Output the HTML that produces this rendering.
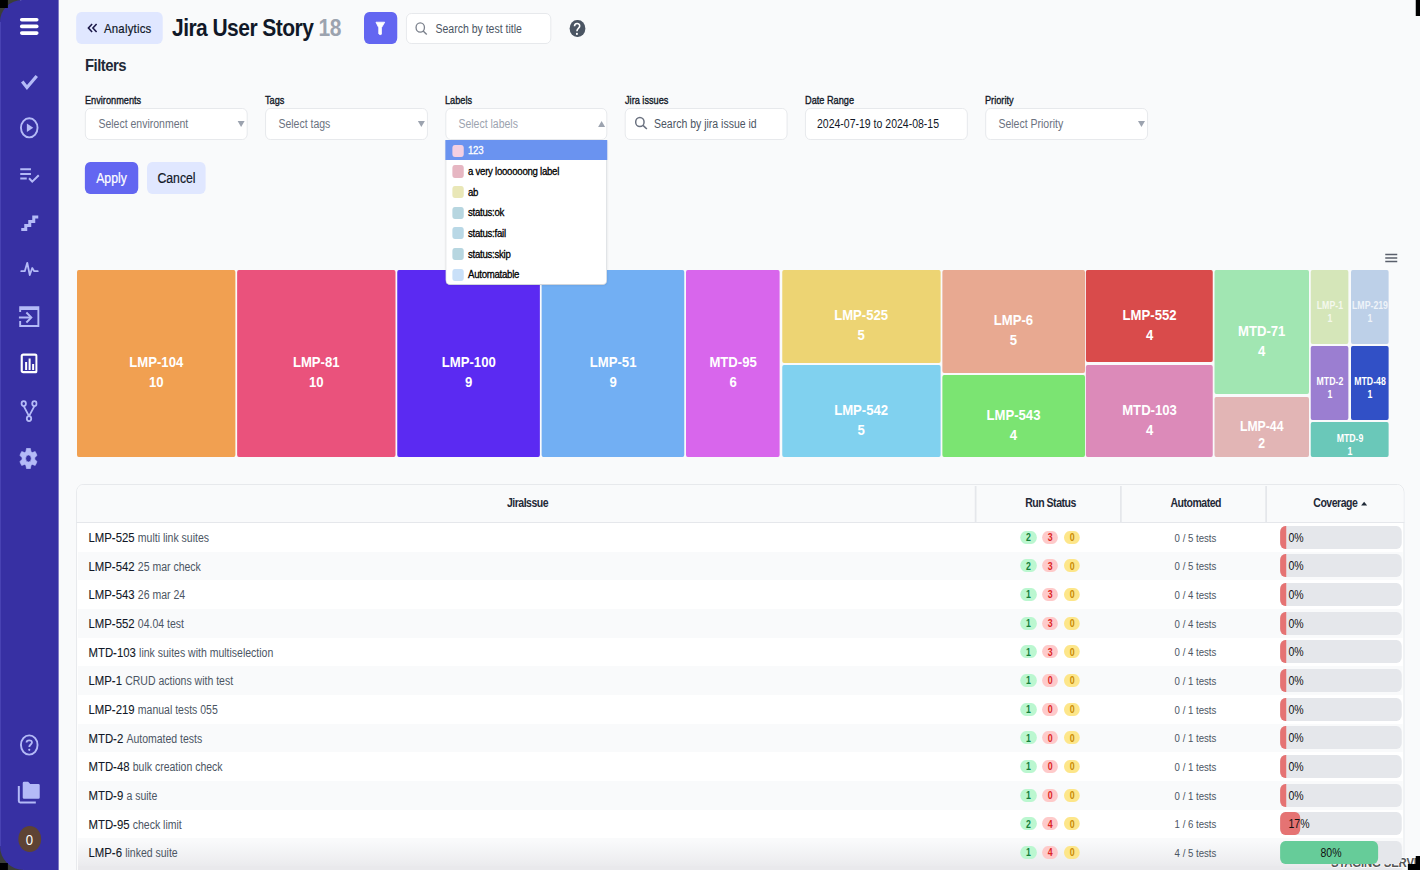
<!DOCTYPE html>
<html><head><meta charset="utf-8"><style>
html,body{margin:0;padding:0;width:1420px;height:870px;overflow:hidden;background:#f9fafb}
#app{position:absolute;left:0;top:0;width:1622.86px;height:870px;transform:scaleX(0.875);transform-origin:0 0;overflow:hidden;font-family:"Liberation Sans",sans-serif}
.t{position:absolute;white-space:nowrap}
</style></head><body><div id="app">
<div style="position:absolute;left:0.00px;top:0px;width:1622.86px;height:870px;background:#f9fafb"></div>
<div style="position:absolute;left:0.00px;top:0px;width:22.86px;height:22px;background:#3b3e38"></div>
<div style="position:absolute;left:0.00px;top:844px;width:27.43px;height:26px;background:#3b3e38"></div>
<div style="position:absolute;left:0.00px;top:0px;width:67.43px;height:870px;background:#3730a3;border-radius:25.14px 0 0 27.43px / 22px 0 0 24px"></div>
<div style="position:absolute;left:0.00px;top:22px;width:1.14px;height:824px;background:#4b45b5"></div>
<svg style="position:absolute;left:21.71px;top:17px;width:22.86px;height:20px" viewBox="0 0 20 20" preserveAspectRatio="none"><g stroke="#fff" stroke-width="3.6" stroke-linecap="round"><line x1="2.5" y1="2.8" x2="17.5" y2="2.8"/><line x1="2.5" y1="9.4" x2="17.5" y2="9.4"/><line x1="2.5" y1="16.1" x2="17.5" y2="16.1"/></g></svg>
<svg style="position:absolute;left:21.71px;top:71px;width:22.86px;height:20px" viewBox="0 0 20 20" preserveAspectRatio="none"><path d="M3 10.5 L7.7 16.5 L17.5 5" fill="none" stroke="#b4baf7" stroke-width="3.2"/></svg>
<svg style="position:absolute;left:21.71px;top:117px;width:22.86px;height:22px" viewBox="0 0 20 22" preserveAspectRatio="none"><ellipse cx="10" cy="10.8" rx="8.3" ry="9.6" fill="none" stroke="#b4baf7" stroke-width="1.9"/><path d="M7.6 6.5 L14 10.8 L7.6 15.1Z" fill="#b4baf7"/></svg>
<svg style="position:absolute;left:21.71px;top:166px;width:24.00px;height:18px" viewBox="0 0 21 18" preserveAspectRatio="none"><g stroke="#b4baf7" stroke-width="2" fill="none"><line x1="1" y1="3.2" x2="11.7" y2="3.2"/><line x1="1" y1="8" x2="11.7" y2="8"/><line x1="1" y1="12.4" x2="7.5" y2="12.4"/><path d="M9.8 12.2 L13 15.6 L19.5 9.2"/></g></svg>
<svg style="position:absolute;left:21.71px;top:211.5px;width:24.00px;height:20px" viewBox="0 0 21 20" preserveAspectRatio="none"><path d="M2 17.5 H6.5 V13.5 H10.5 V9.5 H14.5 V5 H19" fill="none" stroke="#b4baf7" stroke-width="3"/></svg>
<svg style="position:absolute;left:21.71px;top:260px;width:22.86px;height:18px" viewBox="0 0 20 18" preserveAspectRatio="none"><path d="M2 11.2 H5.5 L8 2.8 L10.5 15 L13 8 L15 11.2 H18.5" fill="none" stroke="#b4baf7" stroke-width="1.8" stroke-linejoin="round" stroke-linecap="round"/></svg>
<svg style="position:absolute;left:20.57px;top:305px;width:25.14px;height:23px" viewBox="0 0 22 23" preserveAspectRatio="none"><g fill="none" stroke="#b4baf7" stroke-width="1.9"><path d="M1.8 7 V2.2 H20 V21 H1.8 V16"/><line x1="1.8" y1="3.5" x2="20" y2="3.5" stroke-width="3"/><line x1="0.5" y1="12.5" x2="12.5" y2="12.5"/><path d="M8 7.5 L13 12.5 L8 17.5"/></g></svg>
<svg style="position:absolute;left:22.86px;top:353px;width:20.57px;height:21px" viewBox="0 0 18 21" preserveAspectRatio="none"><g fill="none" stroke="#fff"><rect x="1.6" y="1.6" width="14.8" height="17.6" rx="1.5" stroke-width="2.2"/></g><g fill="#fff"><rect x="5" y="9" width="2" height="8"/><rect x="8.5" y="5.5" width="2" height="11.5"/><rect x="12" y="11" width="2" height="6"/></g></svg>
<svg style="position:absolute;left:22.86px;top:400px;width:20.57px;height:23px" viewBox="0 0 18 23" preserveAspectRatio="none"><g fill="none" stroke="#b4baf7" stroke-width="1.8"><ellipse cx="3.6" cy="3.6" rx="2.2" ry="2.5"/><ellipse cx="14.3" cy="3.6" rx="2.2" ry="2.5"/><ellipse cx="8.9" cy="18.6" rx="2.2" ry="2.5"/><path d="M3.6 6.1 L8.9 16.1 M14.3 6.1 L8.9 16.1"/></g></svg>
<svg style="position:absolute;left:21.71px;top:448px;width:21.71px;height:21px" viewBox="0 0 19 21" preserveAspectRatio="none"><path d="M7.30,0.33 L11.10,0.33 L11.80,3.83 L12.95,4.59 L15.96,3.54 L17.86,7.29 L15.55,9.75 L15.55,11.25 L17.86,13.71 L15.96,17.46 L12.95,16.41 L11.80,17.17 L11.10,20.67 L7.30,20.67 L6.60,17.17 L5.45,16.41 L2.44,17.46 L0.54,13.71 L2.85,11.25 L2.85,9.75 L0.54,7.29 L2.44,3.54 L5.45,4.59 L6.60,3.83Z M12.00,10.5 A2.80,3.5 0 1,0 6.40,10.5 A2.80,3.5 0 1,0 12.00,10.5Z" fill="#b4baf7" fill-rule="evenodd" stroke="#b4baf7" stroke-width="0.6" stroke-linejoin="round"/></svg>
<svg style="position:absolute;left:21.71px;top:734px;width:22.86px;height:22px" viewBox="0 0 20 22" preserveAspectRatio="none"><ellipse cx="10" cy="11" rx="8.3" ry="9.6" fill="none" stroke="#b4baf7" stroke-width="1.9"/><path d="M7.3 8.5 C7.3 5.8 12.7 5.6 12.7 8.4 C12.7 10.4 10 10.6 10 13" fill="none" stroke="#b4baf7" stroke-width="1.8"/><circle cx="10" cy="15.8" r="1.1" fill="#b4baf7"/></svg>
<svg style="position:absolute;left:19.43px;top:780px;width:27.43px;height:24px" viewBox="0 0 24 24" preserveAspectRatio="none"><path d="M7.4 1.8 H11.5 L13.6 3.9 H21.8 Q23.1 3.9 23.1 5.2 V17.5 Q23.1 18.8 21.8 18.8 H7.4 Q6.1 18.8 6.1 17.5 V3.1 Q6.1 1.8 7.4 1.8 Z" fill="#b4baf7"/><path d="M2.2 6 V21 Q2.2 22.4 3.6 22.4 H19.2" fill="none" stroke="#b4baf7" stroke-width="2"/></svg>
<div style="position:absolute;left:20.57px;top:826px;width:26.29px;height:26px;border-radius:50%;background:#5e4334"></div>
<div class="t" style="left:-566.29px;width:1200px;text-align:center;top:829.50px;height:20px;line-height:20px;font-size:15px;font-weight:400;color:#fff;">0</div>
<div style="position:absolute;left:86.86px;top:12px;width:99.43px;height:32px;background:#e0e7ff;border-radius:6px"></div>
<svg style="position:absolute;left:99.43px;top:22px;width:12.57px;height:12px" viewBox="0 0 11 12" preserveAspectRatio="none"><path d="M5.5 2 L1.8 6 L5.5 10 M10 2 L6.3 6 L10 10" fill="none" stroke="#1e1b4b" stroke-width="1.6"/></svg>
<div class="t" style="left:118.86px;top:19.80px;height:17px;line-height:17px;font-size:13px;font-weight:400;color:#111827;letter-spacing:0.25px;-webkit-text-stroke:0.2px #111827">Analytics</div>
<div class="t" style="left:196.57px;top:12.00px;height:31px;line-height:31px;font-size:24px;font-weight:700;color:#111827;letter-spacing:-0.62px">Jira User Story <span style="color:#9ca3af">18</span></div>
<div style="position:absolute;left:416.00px;top:12px;width:37.71px;height:32px;background:#6366f1;border-radius:6px"></div>
<svg style="position:absolute;left:426.29px;top:20px;width:17.14px;height:16px" viewBox="0 0 15 16" preserveAspectRatio="none"><path d="M3.2 2.2 H12 L8.7 7.8 V14.2 Q7.4 15.4 6 13.8 V7.8 Z" fill="#fff" stroke="#fff" stroke-width="0.8" stroke-linejoin="round"/></svg>
<div style="position:absolute;left:464.00px;top:13px;width:165.71px;height:31px;background:#fff;border:1px solid #e5e7eb;border-radius:6px;box-sizing:border-box"></div>
<svg style="position:absolute;left:474.29px;top:22px;width:16.00px;height:13px" viewBox="0 0 14 13" preserveAspectRatio="none"><ellipse cx="5.5" cy="5.5" rx="4.2" ry="4.6" fill="none" stroke="#7b818c" stroke-width="1.3"/><line x1="8.4" y1="9" x2="12" y2="12.5" stroke="#7b818c" stroke-width="1.4"/></svg>
<div class="t" style="left:497.71px;top:20.50px;height:16px;line-height:16px;font-size:12px;font-weight:400;color:#4b5563;">Search by test title</div>
<div style="position:absolute;left:651.43px;top:20px;width:17.14px;height:17px;border-radius:50%;background:#4b5563"></div>
<svg style="position:absolute;left:651.43px;top:20px;width:17.14px;height:17px" viewBox="0 0 15 17" preserveAspectRatio="none"><path d="M4.9 6.3 C4.9 2.7 10.1 2.5 10.1 5.9 C10.1 8.2 7.3 8.4 7.3 11.3" fill="none" stroke="#fff" stroke-width="1.6"/><ellipse cx="7.3" cy="13.9" rx="1.05" ry="1.15" fill="#fff"/></svg>
<div class="t" style="left:97.14px;top:54.60px;height:22px;line-height:22px;font-size:17px;font-weight:700;color:#1f2937;letter-spacing:-0.6px">Filters</div>
<div class="t" style="left:97.14px;top:92.90px;height:14px;line-height:14px;font-size:10.5px;font-weight:400;color:#111827;-webkit-text-stroke:0.35px #111827">Environments</div>
<div style="position:absolute;left:97.14px;top:108px;width:185.83px;height:32px;background:#fff;border:1px solid #e5e7eb;border-radius:6px;box-sizing:border-box"></div>
<div class="t" style="left:112.46px;top:115.50px;height:16px;line-height:16px;font-size:12px;font-weight:400;color:#6b7280;">Select environment</div>
<svg style="position:absolute;left:271.43px;top:119.5px;width:9.14px;height:8px" viewBox="0 0 8 8" preserveAspectRatio="none"><path d="M0.5 1 H7.5 L4 7Z" fill="#9ca3af"/></svg>
<div class="t" style="left:302.86px;top:92.90px;height:14px;line-height:14px;font-size:10.5px;font-weight:400;color:#111827;-webkit-text-stroke:0.35px #111827">Tags</div>
<div style="position:absolute;left:302.86px;top:108px;width:185.83px;height:32px;background:#fff;border:1px solid #e5e7eb;border-radius:6px;box-sizing:border-box"></div>
<div class="t" style="left:318.17px;top:115.50px;height:16px;line-height:16px;font-size:12px;font-weight:400;color:#6b7280;">Select tags</div>
<svg style="position:absolute;left:477.14px;top:119.5px;width:9.14px;height:8px" viewBox="0 0 8 8" preserveAspectRatio="none"><path d="M0.5 1 H7.5 L4 7Z" fill="#9ca3af"/></svg>
<div class="t" style="left:508.57px;top:92.90px;height:14px;line-height:14px;font-size:10.5px;font-weight:400;color:#111827;-webkit-text-stroke:0.35px #111827">Labels</div>
<div style="position:absolute;left:508.57px;top:108px;width:185.83px;height:32px;background:#fff;border:1px solid #e5e7eb;border-radius:6px;box-sizing:border-box"></div>
<div class="t" style="left:523.89px;top:115.50px;height:16px;line-height:16px;font-size:12px;font-weight:400;color:#9ca3af;">Select labels</div>
<svg style="position:absolute;left:682.86px;top:119.5px;width:9.14px;height:8px" viewBox="0 0 8 8" preserveAspectRatio="none"><path d="M0.5 7 H7.5 L4 1Z" fill="#9ca3af"/></svg>
<div class="t" style="left:714.29px;top:92.90px;height:14px;line-height:14px;font-size:10.5px;font-weight:400;color:#111827;-webkit-text-stroke:0.35px #111827">Jira issues</div>
<div style="position:absolute;left:714.29px;top:108px;width:185.83px;height:32px;background:#fff;border:1px solid #e5e7eb;border-radius:6px;box-sizing:border-box"></div>
<svg style="position:absolute;left:724.57px;top:116px;width:16.00px;height:14px" viewBox="0 0 14 14" preserveAspectRatio="none"><ellipse cx="5.5" cy="6" rx="4.2" ry="4.6" fill="none" stroke="#6b7280" stroke-width="1.5"/><line x1="8.6" y1="9.4" x2="12.5" y2="13" stroke="#6b7280" stroke-width="1.6"/></svg>
<div class="t" style="left:747.43px;top:115.50px;height:16px;line-height:16px;font-size:12px;font-weight:400;color:#4b5563;">Search by jira issue id</div>
<div class="t" style="left:920.00px;top:92.90px;height:14px;line-height:14px;font-size:10.5px;font-weight:400;color:#111827;-webkit-text-stroke:0.35px #111827">Date Range</div>
<div style="position:absolute;left:920.00px;top:108px;width:185.83px;height:32px;background:#fff;border:1px solid #e5e7eb;border-radius:6px;box-sizing:border-box"></div>
<div class="t" style="left:933.71px;top:115.50px;height:16px;line-height:16px;font-size:12px;font-weight:400;color:#111827;">2024-07-19 to 2024-08-15</div>
<div class="t" style="left:1125.71px;top:92.90px;height:14px;line-height:14px;font-size:10.5px;font-weight:400;color:#111827;-webkit-text-stroke:0.35px #111827">Priority</div>
<div style="position:absolute;left:1125.71px;top:108px;width:185.83px;height:32px;background:#fff;border:1px solid #e5e7eb;border-radius:6px;box-sizing:border-box"></div>
<div class="t" style="left:1141.03px;top:115.50px;height:16px;line-height:16px;font-size:12px;font-weight:400;color:#6b7280;">Select Priority</div>
<svg style="position:absolute;left:1300.00px;top:119.5px;width:9.14px;height:8px" viewBox="0 0 8 8" preserveAspectRatio="none"><path d="M0.5 1 H7.5 L4 7Z" fill="#9ca3af"/></svg>
<div style="position:absolute;left:97.14px;top:162px;width:60.57px;height:32px;background:#6366f1;border-radius:6px"></div>
<div class="t" style="left:-472.57px;width:1200px;text-align:center;top:169.00px;height:18px;line-height:18px;font-size:14px;font-weight:400;color:#fff;-webkit-text-stroke:0.2px #fff">Apply</div>
<div style="position:absolute;left:168.00px;top:162px;width:67.43px;height:32px;background:#e0e7ff;border-radius:6px"></div>
<div class="t" style="left:-398.29px;width:1200px;text-align:center;top:169.00px;height:18px;line-height:18px;font-size:14px;font-weight:400;color:#111827;-webkit-text-stroke:0.2px #111827">Cancel</div>
<div style="position:absolute;left:88.00px;top:270px;width:181.14px;height:187.3px;background:#f1a051;border-radius:2px"></div>
<div class="t" style="left:-421.43px;width:1200px;text-align:center;top:352.35px;height:20px;line-height:20px;font-size:15px;font-weight:700;color:#fff;opacity:1">LMP-104</div>
<div class="t" style="left:-421.43px;width:1200px;text-align:center;top:372.15px;height:20px;line-height:20px;font-size:15px;font-weight:700;color:#fff;opacity:1">10</div>
<div style="position:absolute;left:270.86px;top:270px;width:181.14px;height:187.3px;background:#ea527c;border-radius:2px"></div>
<div class="t" style="left:-238.57px;width:1200px;text-align:center;top:352.35px;height:20px;line-height:20px;font-size:15px;font-weight:700;color:#fff;opacity:1">LMP-81</div>
<div class="t" style="left:-238.57px;width:1200px;text-align:center;top:372.15px;height:20px;line-height:20px;font-size:15px;font-weight:700;color:#fff;opacity:1">10</div>
<div style="position:absolute;left:454.29px;top:270px;width:162.86px;height:187.3px;background:#5b2af2;border-radius:2px"></div>
<div class="t" style="left:-64.29px;width:1200px;text-align:center;top:352.35px;height:20px;line-height:20px;font-size:15px;font-weight:700;color:#fff;opacity:1">LMP-100</div>
<div class="t" style="left:-64.29px;width:1200px;text-align:center;top:372.15px;height:20px;line-height:20px;font-size:15px;font-weight:700;color:#fff;opacity:1">9</div>
<div style="position:absolute;left:619.43px;top:270px;width:162.51px;height:187.3px;background:#72aff3;border-radius:2px"></div>
<div class="t" style="left:100.69px;width:1200px;text-align:center;top:352.35px;height:20px;line-height:20px;font-size:15px;font-weight:700;color:#fff;opacity:1">LMP-51</div>
<div class="t" style="left:100.69px;width:1200px;text-align:center;top:372.15px;height:20px;line-height:20px;font-size:15px;font-weight:700;color:#fff;opacity:1">9</div>
<div style="position:absolute;left:784.23px;top:270px;width:107.20px;height:187.3px;background:#d866ec;border-radius:2px"></div>
<div class="t" style="left:237.83px;width:1200px;text-align:center;top:352.35px;height:20px;line-height:20px;font-size:15px;font-weight:700;color:#fff;opacity:1">MTD-95</div>
<div class="t" style="left:237.83px;width:1200px;text-align:center;top:372.15px;height:20px;line-height:20px;font-size:15px;font-weight:700;color:#fff;opacity:1">6</div>
<div style="position:absolute;left:893.71px;top:270px;width:180.91px;height:92.5px;background:#edd473;border-radius:2px"></div>
<div class="t" style="left:384.17px;width:1200px;text-align:center;top:304.95px;height:20px;line-height:20px;font-size:15px;font-weight:700;color:#fff;opacity:1">LMP-525</div>
<div class="t" style="left:384.17px;width:1200px;text-align:center;top:324.75px;height:20px;line-height:20px;font-size:15px;font-weight:700;color:#fff;opacity:1">5</div>
<div style="position:absolute;left:893.71px;top:365px;width:180.91px;height:92.30000000000001px;background:#80d1ef;border-radius:2px"></div>
<div class="t" style="left:384.17px;width:1200px;text-align:center;top:399.85px;height:20px;line-height:20px;font-size:15px;font-weight:700;color:#fff;opacity:1">LMP-542</div>
<div class="t" style="left:384.17px;width:1200px;text-align:center;top:419.65px;height:20px;line-height:20px;font-size:15px;font-weight:700;color:#fff;opacity:1">5</div>
<div style="position:absolute;left:1076.91px;top:270px;width:162.63px;height:102.80000000000001px;background:#e8a991;border-radius:2px"></div>
<div class="t" style="left:558.23px;width:1200px;text-align:center;top:310.10px;height:20px;line-height:20px;font-size:15px;font-weight:700;color:#fff;opacity:1">LMP-6</div>
<div class="t" style="left:558.23px;width:1200px;text-align:center;top:329.90px;height:20px;line-height:20px;font-size:15px;font-weight:700;color:#fff;opacity:1">5</div>
<div style="position:absolute;left:1076.91px;top:375.3px;width:162.63px;height:82.0px;background:#7be472;border-radius:2px"></div>
<div class="t" style="left:558.23px;width:1200px;text-align:center;top:405.00px;height:20px;line-height:20px;font-size:15px;font-weight:700;color:#fff;opacity:1">LMP-543</div>
<div class="t" style="left:558.23px;width:1200px;text-align:center;top:424.80px;height:20px;line-height:20px;font-size:15px;font-weight:700;color:#fff;opacity:1">4</div>
<div style="position:absolute;left:1241.26px;top:270px;width:145.03px;height:92.39999999999998px;background:#d94b4b;border-radius:2px"></div>
<div class="t" style="left:713.77px;width:1200px;text-align:center;top:304.90px;height:20px;line-height:20px;font-size:15px;font-weight:700;color:#fff;opacity:1">LMP-552</div>
<div class="t" style="left:713.77px;width:1200px;text-align:center;top:324.70px;height:20px;line-height:20px;font-size:15px;font-weight:700;color:#fff;opacity:1">4</div>
<div style="position:absolute;left:1241.26px;top:365px;width:145.03px;height:92.30000000000001px;background:#dc8ab9;border-radius:2px"></div>
<div class="t" style="left:713.77px;width:1200px;text-align:center;top:399.85px;height:20px;line-height:20px;font-size:15px;font-weight:700;color:#fff;opacity:1">MTD-103</div>
<div class="t" style="left:713.77px;width:1200px;text-align:center;top:419.65px;height:20px;line-height:20px;font-size:15px;font-weight:700;color:#fff;opacity:1">4</div>
<div style="position:absolute;left:1388.11px;top:270px;width:107.66px;height:124px;background:#a1e6b2;border-radius:2px"></div>
<div class="t" style="left:841.94px;width:1200px;text-align:center;top:320.70px;height:20px;line-height:20px;font-size:15px;font-weight:700;color:#fff;opacity:1">MTD-71</div>
<div class="t" style="left:841.94px;width:1200px;text-align:center;top:340.50px;height:20px;line-height:20px;font-size:15px;font-weight:700;color:#fff;opacity:1">4</div>
<div style="position:absolute;left:1388.11px;top:396.9px;width:107.66px;height:60.400000000000034px;background:#e2b5b5;border-radius:2px"></div>
<div class="t" style="left:841.94px;width:1200px;text-align:center;top:416.80px;height:18px;line-height:18px;font-size:14px;font-weight:700;color:#fff;opacity:1">LMP-44</div>
<div class="t" style="left:841.94px;width:1200px;text-align:center;top:433.60px;height:18px;line-height:18px;font-size:14px;font-weight:700;color:#fff;opacity:1">2</div>
<div style="position:absolute;left:1498.29px;top:270px;width:43.20px;height:73.80000000000001px;background:#d5e6b9;border-radius:2px"></div>
<div class="t" style="left:919.89px;width:1200px;text-align:center;top:298.90px;height:13px;line-height:13px;font-size:10px;font-weight:700;color:#fff;opacity:0.75">LMP-1</div>
<div class="t" style="left:919.89px;width:1200px;text-align:center;top:311.90px;height:13px;line-height:13px;font-size:10px;font-weight:700;color:#fff;opacity:0.75">1</div>
<div style="position:absolute;left:1544.00px;top:270px;width:43.43px;height:73.80000000000001px;background:#bdd0e8;border-radius:2px"></div>
<div class="t" style="left:965.71px;width:1200px;text-align:center;top:298.90px;height:13px;line-height:13px;font-size:10px;font-weight:700;color:#fff;opacity:0.75">LMP-219</div>
<div class="t" style="left:965.71px;width:1200px;text-align:center;top:311.90px;height:13px;line-height:13px;font-size:10px;font-weight:700;color:#fff;opacity:0.75">1</div>
<div style="position:absolute;left:1498.29px;top:346.3px;width:43.20px;height:73.69999999999999px;background:#9b7ed1;border-radius:2px"></div>
<div class="t" style="left:919.89px;width:1200px;text-align:center;top:375.15px;height:13px;line-height:13px;font-size:10px;font-weight:700;color:#fff;opacity:1">MTD-2</div>
<div class="t" style="left:919.89px;width:1200px;text-align:center;top:388.15px;height:13px;line-height:13px;font-size:10px;font-weight:700;color:#fff;opacity:1">1</div>
<div style="position:absolute;left:1544.00px;top:346.3px;width:43.43px;height:73.69999999999999px;background:#3150c6;border-radius:2px"></div>
<div class="t" style="left:965.71px;width:1200px;text-align:center;top:375.15px;height:13px;line-height:13px;font-size:10px;font-weight:700;color:#fff;opacity:1">MTD-48</div>
<div class="t" style="left:965.71px;width:1200px;text-align:center;top:388.15px;height:13px;line-height:13px;font-size:10px;font-weight:700;color:#fff;opacity:1">1</div>
<div style="position:absolute;left:1498.29px;top:422.2px;width:89.14px;height:35.10000000000002px;background:#6ac8b9;border-radius:2px"></div>
<div class="t" style="left:942.86px;width:1200px;text-align:center;top:431.75px;height:13px;line-height:13px;font-size:10px;font-weight:700;color:#fff;opacity:1">MTD-9</div>
<div class="t" style="left:942.86px;width:1200px;text-align:center;top:444.75px;height:13px;line-height:13px;font-size:10px;font-weight:700;color:#fff;opacity:1">1</div>
<svg style="position:absolute;left:1582.29px;top:252.8px;width:16.00px;height:10px" viewBox="0 0 14 10" preserveAspectRatio="none"><g stroke="#5a5f6b" stroke-width="1.5"><line x1="1" y1="1.5" x2="13" y2="1.5"/><line x1="1" y1="5" x2="13" y2="5"/><line x1="1" y1="8.5" x2="13" y2="8.5"/></g></svg>
<div style="position:absolute;left:508.57px;top:140px;width:185.49px;height:144.5px;background:#fff;border:1px solid #d1d5db;border-top:none;border-radius:0 0 5px 5px;box-sizing:border-box;box-shadow:0 1px 2px rgba(0,0,0,0.05)"></div>
<div style="position:absolute;left:508.57px;top:140px;width:185.49px;height:20px;background:#6a93f0"></div>
<div style="position:absolute;left:517.49px;top:144.6px;width:12.57px;height:12.300000000000011px;background:#f3cfe2;border-radius:3px"></div>
<div class="t" style="left:534.86px;top:143.30px;height:14px;line-height:14px;font-size:11px;font-weight:400;color:#fff;letter-spacing:-0.3px;-webkit-text-stroke:0.3px #fff">123</div>
<div style="position:absolute;left:517.49px;top:165.25px;width:12.57px;height:12.300000000000011px;background:#e6b6c2;border-radius:3px"></div>
<div class="t" style="left:534.86px;top:163.95px;height:14px;line-height:14px;font-size:11px;font-weight:400;color:#000;letter-spacing:-0.3px;-webkit-text-stroke:0.3px #000">a very loooooong label</div>
<div style="position:absolute;left:517.49px;top:185.9px;width:12.57px;height:12.300000000000011px;background:#e9e7b7;border-radius:3px"></div>
<div class="t" style="left:534.86px;top:184.60px;height:14px;line-height:14px;font-size:11px;font-weight:400;color:#000;letter-spacing:-0.3px;-webkit-text-stroke:0.3px #000">ab</div>
<div style="position:absolute;left:517.49px;top:206.54999999999998px;width:12.57px;height:12.300000000000011px;background:#b7d6e0;border-radius:3px"></div>
<div class="t" style="left:534.86px;top:205.25px;height:14px;line-height:14px;font-size:11px;font-weight:400;color:#000;letter-spacing:-0.3px;-webkit-text-stroke:0.3px #000">status:ok</div>
<div style="position:absolute;left:517.49px;top:227.2px;width:12.57px;height:12.300000000000011px;background:#b9d8e6;border-radius:3px"></div>
<div class="t" style="left:534.86px;top:225.90px;height:14px;line-height:14px;font-size:11px;font-weight:400;color:#000;letter-spacing:-0.3px;-webkit-text-stroke:0.3px #000">status:fail</div>
<div style="position:absolute;left:517.49px;top:247.85px;width:12.57px;height:12.299999999999983px;background:#b7d6e0;border-radius:3px"></div>
<div class="t" style="left:534.86px;top:246.55px;height:14px;line-height:14px;font-size:11px;font-weight:400;color:#000;letter-spacing:-0.3px;-webkit-text-stroke:0.3px #000">status:skip</div>
<div style="position:absolute;left:517.49px;top:268.5px;width:12.57px;height:12.299999999999955px;background:#c9e0f8;border-radius:3px"></div>
<div class="t" style="left:534.86px;top:267.20px;height:14px;line-height:14px;font-size:11px;font-weight:400;color:#000;letter-spacing:-0.3px;-webkit-text-stroke:0.3px #000">Automatable</div>
<div style="position:absolute;left:87.43px;top:484px;width:1517.14px;height:396px;background:#fff;border:1px solid #e5e7eb;border-radius:8px 8px 0 0;box-sizing:border-box"></div>
<div style="position:absolute;left:88.00px;top:485px;width:1516.00px;height:37.299999999999955px;background:#f9fafb;border-radius:8px 8px 0 0"></div>
<div style="position:absolute;left:87.43px;top:522px;width:1517.14px;height:1px;background:#e5e7eb"></div>
<div style="position:absolute;left:1113.71px;top:485.5px;width:2.29px;height:36.5px;background:#e5e7eb"></div>
<div style="position:absolute;left:1280.00px;top:485.5px;width:2.29px;height:36.5px;background:#e5e7eb"></div>
<div style="position:absolute;left:1445.71px;top:485.5px;width:2.29px;height:36.5px;background:#e5e7eb"></div>
<div class="t" style="left:2.86px;width:1200px;text-align:center;top:495.40px;height:16px;line-height:16px;font-size:12px;font-weight:700;color:#1f2937;letter-spacing:-0.55px">JiraIssue</div>
<div class="t" style="left:600.57px;width:1200px;text-align:center;top:495.40px;height:16px;line-height:16px;font-size:12px;font-weight:700;color:#1f2937;letter-spacing:-0.55px">Run Status</div>
<div class="t" style="left:766.51px;width:1200px;text-align:center;top:495.40px;height:16px;line-height:16px;font-size:12px;font-weight:700;color:#1f2937;letter-spacing:-0.55px">Automated</div>
<div class="t" style="left:926.06px;width:1200px;text-align:center;top:495.40px;height:16px;line-height:16px;font-size:12px;font-weight:700;color:#1f2937;letter-spacing:-0.55px">Coverage</div>
<svg style="position:absolute;left:1554.86px;top:500.5px;width:8.00px;height:5px" viewBox="0 0 7 5" preserveAspectRatio="none"><path d="M0.5 4.5 L3.5 0.8 L6.5 4.5Z" fill="#1f2937"/></svg>
<div class="t" style="left:101.14px;top:528.93px;height:18px;line-height:18px;font-size:13px;color:#111827"><span style="-webkit-text-stroke:0.1px #111827">LMP-525</span> <span style="font-size:12px;color:#4b5563">multi link suites</span></div>
<div style="position:absolute;left:1166.29px;top:530.83px;width:18.29px;height:13.0px;background:#bbf7d0;border-radius:7px"></div>
<div class="t" style="left:575.43px;width:1200px;text-align:center;top:531.03px;height:13px;line-height:13px;font-size:10px;font-weight:700;color:#15803d;">2</div>
<div style="position:absolute;left:1191.20px;top:530.83px;width:18.29px;height:13.0px;background:#fecaca;border-radius:7px"></div>
<div class="t" style="left:600.34px;width:1200px;text-align:center;top:531.03px;height:13px;line-height:13px;font-size:10px;font-weight:700;color:#dc2626;">3</div>
<div style="position:absolute;left:1216.11px;top:530.83px;width:18.29px;height:13.0px;background:#fde68a;border-radius:7px"></div>
<div class="t" style="left:625.26px;width:1200px;text-align:center;top:531.03px;height:13px;line-height:13px;font-size:10px;font-weight:700;color:#ca8a04;">0</div>
<div class="t" style="left:766.29px;width:1200px;text-align:center;top:530.63px;height:14px;line-height:14px;font-size:11px;font-weight:400;color:#4b5563;">0 / 5 tests</div>
<div style="position:absolute;left:1462.86px;top:525.83px;width:138.86px;height:23.0px;background:#e5e7eb;border-radius:6px"></div>
<div style="position:absolute;left:1462.86px;top:525.83px;width:6.86px;height:23.0px;background:#e57373;border-radius:6px 0 0 6px"></div>
<div class="t" style="left:1472.57px;top:529.63px;height:16px;line-height:16px;font-size:12px;font-weight:400;color:#111;">0%</div>
<div style="position:absolute;left:88.57px;top:551.66px;width:1514.86px;height:28.659999999999968px;background:#f9fafb"></div>
<div class="t" style="left:101.14px;top:557.59px;height:18px;line-height:18px;font-size:13px;color:#111827"><span style="-webkit-text-stroke:0.1px #111827">LMP-542</span> <span style="font-size:12px;color:#4b5563">25 mar check</span></div>
<div style="position:absolute;left:1166.29px;top:559.49px;width:18.29px;height:13.0px;background:#bbf7d0;border-radius:7px"></div>
<div class="t" style="left:575.43px;width:1200px;text-align:center;top:559.69px;height:13px;line-height:13px;font-size:10px;font-weight:700;color:#15803d;">2</div>
<div style="position:absolute;left:1191.20px;top:559.49px;width:18.29px;height:13.0px;background:#fecaca;border-radius:7px"></div>
<div class="t" style="left:600.34px;width:1200px;text-align:center;top:559.69px;height:13px;line-height:13px;font-size:10px;font-weight:700;color:#dc2626;">3</div>
<div style="position:absolute;left:1216.11px;top:559.49px;width:18.29px;height:13.0px;background:#fde68a;border-radius:7px"></div>
<div class="t" style="left:625.26px;width:1200px;text-align:center;top:559.69px;height:13px;line-height:13px;font-size:10px;font-weight:700;color:#ca8a04;">0</div>
<div class="t" style="left:766.29px;width:1200px;text-align:center;top:559.29px;height:14px;line-height:14px;font-size:11px;font-weight:400;color:#4b5563;">0 / 5 tests</div>
<div style="position:absolute;left:1462.86px;top:554.49px;width:138.86px;height:23.0px;background:#e5e7eb;border-radius:6px"></div>
<div style="position:absolute;left:1462.86px;top:554.49px;width:6.86px;height:23.0px;background:#e57373;border-radius:6px 0 0 6px"></div>
<div class="t" style="left:1472.57px;top:558.29px;height:16px;line-height:16px;font-size:12px;font-weight:400;color:#111;">0%</div>
<div class="t" style="left:101.14px;top:586.25px;height:18px;line-height:18px;font-size:13px;color:#111827"><span style="-webkit-text-stroke:0.1px #111827">LMP-543</span> <span style="font-size:12px;color:#4b5563">26 mar 24</span></div>
<div style="position:absolute;left:1166.29px;top:588.1500000000001px;width:18.29px;height:13.0px;background:#bbf7d0;border-radius:7px"></div>
<div class="t" style="left:575.43px;width:1200px;text-align:center;top:588.35px;height:13px;line-height:13px;font-size:10px;font-weight:700;color:#15803d;">1</div>
<div style="position:absolute;left:1191.20px;top:588.1500000000001px;width:18.29px;height:13.0px;background:#fecaca;border-radius:7px"></div>
<div class="t" style="left:600.34px;width:1200px;text-align:center;top:588.35px;height:13px;line-height:13px;font-size:10px;font-weight:700;color:#dc2626;">3</div>
<div style="position:absolute;left:1216.11px;top:588.1500000000001px;width:18.29px;height:13.0px;background:#fde68a;border-radius:7px"></div>
<div class="t" style="left:625.26px;width:1200px;text-align:center;top:588.35px;height:13px;line-height:13px;font-size:10px;font-weight:700;color:#ca8a04;">0</div>
<div class="t" style="left:766.29px;width:1200px;text-align:center;top:587.95px;height:14px;line-height:14px;font-size:11px;font-weight:400;color:#4b5563;">0 / 4 tests</div>
<div style="position:absolute;left:1462.86px;top:583.1500000000001px;width:138.86px;height:23.0px;background:#e5e7eb;border-radius:6px"></div>
<div style="position:absolute;left:1462.86px;top:583.1500000000001px;width:6.86px;height:23.0px;background:#e57373;border-radius:6px 0 0 6px"></div>
<div class="t" style="left:1472.57px;top:586.95px;height:16px;line-height:16px;font-size:12px;font-weight:400;color:#111;">0%</div>
<div style="position:absolute;left:88.57px;top:608.98px;width:1514.86px;height:28.659999999999968px;background:#f9fafb"></div>
<div class="t" style="left:101.14px;top:614.91px;height:18px;line-height:18px;font-size:13px;color:#111827"><span style="-webkit-text-stroke:0.1px #111827">LMP-552</span> <span style="font-size:12px;color:#4b5563">04.04 test</span></div>
<div style="position:absolute;left:1166.29px;top:616.8100000000001px;width:18.29px;height:13.0px;background:#bbf7d0;border-radius:7px"></div>
<div class="t" style="left:575.43px;width:1200px;text-align:center;top:617.01px;height:13px;line-height:13px;font-size:10px;font-weight:700;color:#15803d;">1</div>
<div style="position:absolute;left:1191.20px;top:616.8100000000001px;width:18.29px;height:13.0px;background:#fecaca;border-radius:7px"></div>
<div class="t" style="left:600.34px;width:1200px;text-align:center;top:617.01px;height:13px;line-height:13px;font-size:10px;font-weight:700;color:#dc2626;">3</div>
<div style="position:absolute;left:1216.11px;top:616.8100000000001px;width:18.29px;height:13.0px;background:#fde68a;border-radius:7px"></div>
<div class="t" style="left:625.26px;width:1200px;text-align:center;top:617.01px;height:13px;line-height:13px;font-size:10px;font-weight:700;color:#ca8a04;">0</div>
<div class="t" style="left:766.29px;width:1200px;text-align:center;top:616.61px;height:14px;line-height:14px;font-size:11px;font-weight:400;color:#4b5563;">0 / 4 tests</div>
<div style="position:absolute;left:1462.86px;top:611.8100000000001px;width:138.86px;height:23.0px;background:#e5e7eb;border-radius:6px"></div>
<div style="position:absolute;left:1462.86px;top:611.8100000000001px;width:6.86px;height:23.0px;background:#e57373;border-radius:6px 0 0 6px"></div>
<div class="t" style="left:1472.57px;top:615.61px;height:16px;line-height:16px;font-size:12px;font-weight:400;color:#111;">0%</div>
<div class="t" style="left:101.14px;top:643.57px;height:18px;line-height:18px;font-size:13px;color:#111827"><span style="-webkit-text-stroke:0.1px #111827">MTD-103</span> <span style="font-size:12px;color:#4b5563">link suites with multiselection</span></div>
<div style="position:absolute;left:1166.29px;top:645.47px;width:18.29px;height:13.0px;background:#bbf7d0;border-radius:7px"></div>
<div class="t" style="left:575.43px;width:1200px;text-align:center;top:645.67px;height:13px;line-height:13px;font-size:10px;font-weight:700;color:#15803d;">1</div>
<div style="position:absolute;left:1191.20px;top:645.47px;width:18.29px;height:13.0px;background:#fecaca;border-radius:7px"></div>
<div class="t" style="left:600.34px;width:1200px;text-align:center;top:645.67px;height:13px;line-height:13px;font-size:10px;font-weight:700;color:#dc2626;">3</div>
<div style="position:absolute;left:1216.11px;top:645.47px;width:18.29px;height:13.0px;background:#fde68a;border-radius:7px"></div>
<div class="t" style="left:625.26px;width:1200px;text-align:center;top:645.67px;height:13px;line-height:13px;font-size:10px;font-weight:700;color:#ca8a04;">0</div>
<div class="t" style="left:766.29px;width:1200px;text-align:center;top:645.27px;height:14px;line-height:14px;font-size:11px;font-weight:400;color:#4b5563;">0 / 4 tests</div>
<div style="position:absolute;left:1462.86px;top:640.47px;width:138.86px;height:23.0px;background:#e5e7eb;border-radius:6px"></div>
<div style="position:absolute;left:1462.86px;top:640.47px;width:6.86px;height:23.0px;background:#e57373;border-radius:6px 0 0 6px"></div>
<div class="t" style="left:1472.57px;top:644.27px;height:16px;line-height:16px;font-size:12px;font-weight:400;color:#111;">0%</div>
<div style="position:absolute;left:88.57px;top:666.3px;width:1514.86px;height:28.659999999999968px;background:#f9fafb"></div>
<div class="t" style="left:101.14px;top:672.23px;height:18px;line-height:18px;font-size:13px;color:#111827"><span style="-webkit-text-stroke:0.1px #111827">LMP-1</span> <span style="font-size:12px;color:#4b5563">CRUD actions with test</span></div>
<div style="position:absolute;left:1166.29px;top:674.13px;width:18.29px;height:13.0px;background:#bbf7d0;border-radius:7px"></div>
<div class="t" style="left:575.43px;width:1200px;text-align:center;top:674.33px;height:13px;line-height:13px;font-size:10px;font-weight:700;color:#15803d;">1</div>
<div style="position:absolute;left:1191.20px;top:674.13px;width:18.29px;height:13.0px;background:#fecaca;border-radius:7px"></div>
<div class="t" style="left:600.34px;width:1200px;text-align:center;top:674.33px;height:13px;line-height:13px;font-size:10px;font-weight:700;color:#dc2626;">0</div>
<div style="position:absolute;left:1216.11px;top:674.13px;width:18.29px;height:13.0px;background:#fde68a;border-radius:7px"></div>
<div class="t" style="left:625.26px;width:1200px;text-align:center;top:674.33px;height:13px;line-height:13px;font-size:10px;font-weight:700;color:#ca8a04;">0</div>
<div class="t" style="left:766.29px;width:1200px;text-align:center;top:673.93px;height:14px;line-height:14px;font-size:11px;font-weight:400;color:#4b5563;">0 / 1 tests</div>
<div style="position:absolute;left:1462.86px;top:669.13px;width:138.86px;height:23.0px;background:#e5e7eb;border-radius:6px"></div>
<div style="position:absolute;left:1462.86px;top:669.13px;width:6.86px;height:23.0px;background:#e57373;border-radius:6px 0 0 6px"></div>
<div class="t" style="left:1472.57px;top:672.93px;height:16px;line-height:16px;font-size:12px;font-weight:400;color:#111;">0%</div>
<div class="t" style="left:101.14px;top:700.89px;height:18px;line-height:18px;font-size:13px;color:#111827"><span style="-webkit-text-stroke:0.1px #111827">LMP-219</span> <span style="font-size:12px;color:#4b5563">manual tests 055</span></div>
<div style="position:absolute;left:1166.29px;top:702.7900000000001px;width:18.29px;height:13.0px;background:#bbf7d0;border-radius:7px"></div>
<div class="t" style="left:575.43px;width:1200px;text-align:center;top:702.99px;height:13px;line-height:13px;font-size:10px;font-weight:700;color:#15803d;">1</div>
<div style="position:absolute;left:1191.20px;top:702.7900000000001px;width:18.29px;height:13.0px;background:#fecaca;border-radius:7px"></div>
<div class="t" style="left:600.34px;width:1200px;text-align:center;top:702.99px;height:13px;line-height:13px;font-size:10px;font-weight:700;color:#dc2626;">0</div>
<div style="position:absolute;left:1216.11px;top:702.7900000000001px;width:18.29px;height:13.0px;background:#fde68a;border-radius:7px"></div>
<div class="t" style="left:625.26px;width:1200px;text-align:center;top:702.99px;height:13px;line-height:13px;font-size:10px;font-weight:700;color:#ca8a04;">0</div>
<div class="t" style="left:766.29px;width:1200px;text-align:center;top:702.59px;height:14px;line-height:14px;font-size:11px;font-weight:400;color:#4b5563;">0 / 1 tests</div>
<div style="position:absolute;left:1462.86px;top:697.7900000000001px;width:138.86px;height:23.0px;background:#e5e7eb;border-radius:6px"></div>
<div style="position:absolute;left:1462.86px;top:697.7900000000001px;width:6.86px;height:23.0px;background:#e57373;border-radius:6px 0 0 6px"></div>
<div class="t" style="left:1472.57px;top:701.59px;height:16px;line-height:16px;font-size:12px;font-weight:400;color:#111;">0%</div>
<div style="position:absolute;left:88.57px;top:723.62px;width:1514.86px;height:28.659999999999968px;background:#f9fafb"></div>
<div class="t" style="left:101.14px;top:729.55px;height:18px;line-height:18px;font-size:13px;color:#111827"><span style="-webkit-text-stroke:0.1px #111827">MTD-2</span> <span style="font-size:12px;color:#4b5563">Automated tests</span></div>
<div style="position:absolute;left:1166.29px;top:731.45px;width:18.29px;height:13.0px;background:#bbf7d0;border-radius:7px"></div>
<div class="t" style="left:575.43px;width:1200px;text-align:center;top:731.65px;height:13px;line-height:13px;font-size:10px;font-weight:700;color:#15803d;">1</div>
<div style="position:absolute;left:1191.20px;top:731.45px;width:18.29px;height:13.0px;background:#fecaca;border-radius:7px"></div>
<div class="t" style="left:600.34px;width:1200px;text-align:center;top:731.65px;height:13px;line-height:13px;font-size:10px;font-weight:700;color:#dc2626;">0</div>
<div style="position:absolute;left:1216.11px;top:731.45px;width:18.29px;height:13.0px;background:#fde68a;border-radius:7px"></div>
<div class="t" style="left:625.26px;width:1200px;text-align:center;top:731.65px;height:13px;line-height:13px;font-size:10px;font-weight:700;color:#ca8a04;">0</div>
<div class="t" style="left:766.29px;width:1200px;text-align:center;top:731.25px;height:14px;line-height:14px;font-size:11px;font-weight:400;color:#4b5563;">0 / 1 tests</div>
<div style="position:absolute;left:1462.86px;top:726.45px;width:138.86px;height:23.0px;background:#e5e7eb;border-radius:6px"></div>
<div style="position:absolute;left:1462.86px;top:726.45px;width:6.86px;height:23.0px;background:#e57373;border-radius:6px 0 0 6px"></div>
<div class="t" style="left:1472.57px;top:730.25px;height:16px;line-height:16px;font-size:12px;font-weight:400;color:#111;">0%</div>
<div class="t" style="left:101.14px;top:758.21px;height:18px;line-height:18px;font-size:13px;color:#111827"><span style="-webkit-text-stroke:0.1px #111827">MTD-48</span> <span style="font-size:12px;color:#4b5563">bulk creation check</span></div>
<div style="position:absolute;left:1166.29px;top:760.11px;width:18.29px;height:13.0px;background:#bbf7d0;border-radius:7px"></div>
<div class="t" style="left:575.43px;width:1200px;text-align:center;top:760.31px;height:13px;line-height:13px;font-size:10px;font-weight:700;color:#15803d;">1</div>
<div style="position:absolute;left:1191.20px;top:760.11px;width:18.29px;height:13.0px;background:#fecaca;border-radius:7px"></div>
<div class="t" style="left:600.34px;width:1200px;text-align:center;top:760.31px;height:13px;line-height:13px;font-size:10px;font-weight:700;color:#dc2626;">0</div>
<div style="position:absolute;left:1216.11px;top:760.11px;width:18.29px;height:13.0px;background:#fde68a;border-radius:7px"></div>
<div class="t" style="left:625.26px;width:1200px;text-align:center;top:760.31px;height:13px;line-height:13px;font-size:10px;font-weight:700;color:#ca8a04;">0</div>
<div class="t" style="left:766.29px;width:1200px;text-align:center;top:759.91px;height:14px;line-height:14px;font-size:11px;font-weight:400;color:#4b5563;">0 / 1 tests</div>
<div style="position:absolute;left:1462.86px;top:755.11px;width:138.86px;height:23.0px;background:#e5e7eb;border-radius:6px"></div>
<div style="position:absolute;left:1462.86px;top:755.11px;width:6.86px;height:23.0px;background:#e57373;border-radius:6px 0 0 6px"></div>
<div class="t" style="left:1472.57px;top:758.91px;height:16px;line-height:16px;font-size:12px;font-weight:400;color:#111;">0%</div>
<div style="position:absolute;left:88.57px;top:780.94px;width:1514.86px;height:28.659999999999968px;background:#f9fafb"></div>
<div class="t" style="left:101.14px;top:786.87px;height:18px;line-height:18px;font-size:13px;color:#111827"><span style="-webkit-text-stroke:0.1px #111827">MTD-9</span> <span style="font-size:12px;color:#4b5563">a suite</span></div>
<div style="position:absolute;left:1166.29px;top:788.7700000000001px;width:18.29px;height:13.0px;background:#bbf7d0;border-radius:7px"></div>
<div class="t" style="left:575.43px;width:1200px;text-align:center;top:788.97px;height:13px;line-height:13px;font-size:10px;font-weight:700;color:#15803d;">1</div>
<div style="position:absolute;left:1191.20px;top:788.7700000000001px;width:18.29px;height:13.0px;background:#fecaca;border-radius:7px"></div>
<div class="t" style="left:600.34px;width:1200px;text-align:center;top:788.97px;height:13px;line-height:13px;font-size:10px;font-weight:700;color:#dc2626;">0</div>
<div style="position:absolute;left:1216.11px;top:788.7700000000001px;width:18.29px;height:13.0px;background:#fde68a;border-radius:7px"></div>
<div class="t" style="left:625.26px;width:1200px;text-align:center;top:788.97px;height:13px;line-height:13px;font-size:10px;font-weight:700;color:#ca8a04;">0</div>
<div class="t" style="left:766.29px;width:1200px;text-align:center;top:788.57px;height:14px;line-height:14px;font-size:11px;font-weight:400;color:#4b5563;">0 / 1 tests</div>
<div style="position:absolute;left:1462.86px;top:783.7700000000001px;width:138.86px;height:23.0px;background:#e5e7eb;border-radius:6px"></div>
<div style="position:absolute;left:1462.86px;top:783.7700000000001px;width:6.86px;height:23.0px;background:#e57373;border-radius:6px 0 0 6px"></div>
<div class="t" style="left:1472.57px;top:787.57px;height:16px;line-height:16px;font-size:12px;font-weight:400;color:#111;">0%</div>
<div class="t" style="left:101.14px;top:815.53px;height:18px;line-height:18px;font-size:13px;color:#111827"><span style="-webkit-text-stroke:0.1px #111827">MTD-95</span> <span style="font-size:12px;color:#4b5563">check limit</span></div>
<div style="position:absolute;left:1166.29px;top:817.4300000000001px;width:18.29px;height:13.0px;background:#bbf7d0;border-radius:7px"></div>
<div class="t" style="left:575.43px;width:1200px;text-align:center;top:817.63px;height:13px;line-height:13px;font-size:10px;font-weight:700;color:#15803d;">2</div>
<div style="position:absolute;left:1191.20px;top:817.4300000000001px;width:18.29px;height:13.0px;background:#fecaca;border-radius:7px"></div>
<div class="t" style="left:600.34px;width:1200px;text-align:center;top:817.63px;height:13px;line-height:13px;font-size:10px;font-weight:700;color:#dc2626;">4</div>
<div style="position:absolute;left:1216.11px;top:817.4300000000001px;width:18.29px;height:13.0px;background:#fde68a;border-radius:7px"></div>
<div class="t" style="left:625.26px;width:1200px;text-align:center;top:817.63px;height:13px;line-height:13px;font-size:10px;font-weight:700;color:#ca8a04;">0</div>
<div class="t" style="left:766.29px;width:1200px;text-align:center;top:817.23px;height:14px;line-height:14px;font-size:11px;font-weight:400;color:#4b5563;">1 / 6 tests</div>
<div style="position:absolute;left:1462.86px;top:812.4300000000001px;width:138.86px;height:23.0px;background:#e5e7eb;border-radius:6px"></div>
<div style="position:absolute;left:1462.86px;top:812.4300000000001px;width:23.43px;height:23.0px;background:#e57373;border-radius:6px"></div>
<div class="t" style="left:1472.57px;top:816.23px;height:16px;line-height:16px;font-size:12px;font-weight:400;color:#111;">17%</div>
<div style="position:absolute;left:88.57px;top:838.26px;width:1514.86px;height:27.74000000000001px;background:linear-gradient(#f9fafb 10%,#ebebee)"></div>
<div style="position:absolute;left:88.57px;top:866px;width:1514.86px;height:4px;background:#e9e9ec"></div>
<div class="t" style="left:101.14px;top:844.19px;height:18px;line-height:18px;font-size:13px;color:#111827"><span style="-webkit-text-stroke:0.1px #111827">LMP-6</span> <span style="font-size:12px;color:#4b5563">linked suite</span></div>
<div style="position:absolute;left:1166.29px;top:846.09px;width:18.29px;height:13.0px;background:#bbf7d0;border-radius:7px"></div>
<div class="t" style="left:575.43px;width:1200px;text-align:center;top:846.29px;height:13px;line-height:13px;font-size:10px;font-weight:700;color:#15803d;">1</div>
<div style="position:absolute;left:1191.20px;top:846.09px;width:18.29px;height:13.0px;background:#fecaca;border-radius:7px"></div>
<div class="t" style="left:600.34px;width:1200px;text-align:center;top:846.29px;height:13px;line-height:13px;font-size:10px;font-weight:700;color:#dc2626;">4</div>
<div style="position:absolute;left:1216.11px;top:846.09px;width:18.29px;height:13.0px;background:#fde68a;border-radius:7px"></div>
<div class="t" style="left:625.26px;width:1200px;text-align:center;top:846.29px;height:13px;line-height:13px;font-size:10px;font-weight:700;color:#ca8a04;">0</div>
<div class="t" style="left:766.29px;width:1200px;text-align:center;top:845.89px;height:14px;line-height:14px;font-size:11px;font-weight:400;color:#4b5563;">4 / 5 tests</div>
<div style="position:absolute;left:1462.86px;top:868.3px;width:138.86px;height:11.700000000000045px;background:#e5e7eb;border-radius:6px"></div>
<div class="t" style="left:1521.14px;top:853.50px;height:17px;line-height:17px;font-size:13px;font-weight:700;color:#555;letter-spacing:-0.2px;-webkit-text-stroke:1.4px #fff;paint-order:stroke fill">STAGING SERVER</div>
<div style="position:absolute;left:1462.86px;top:841.09px;width:138.86px;height:23.0px;background:#e5e7eb;border-radius:6px"></div>
<div style="position:absolute;left:1462.86px;top:841.09px;width:111.66px;height:23.0px;background:#66cc99;border-radius:6px"></div>
<div class="t" style="left:921.14px;width:1200px;text-align:center;top:844.89px;height:16px;line-height:16px;font-size:12px;font-weight:400;color:#111;">80%</div>
<div style="position:absolute;left:0.00px;top:0px;width:9.14px;height:8px;background:#000"></div>
<div style="position:absolute;left:0.00px;top:863px;width:9.14px;height:7px;background:#000"></div>
<div style="position:absolute;left:1618.29px;top:0px;width:4.57px;height:16px;background:#000"></div>
<div style="position:absolute;left:1618.29px;top:856px;width:4.57px;height:14px;background:#000"></div>
<div style="position:absolute;left:1609.14px;top:864px;width:13.71px;height:6px;background:#000"></div>
</div></body></html>
